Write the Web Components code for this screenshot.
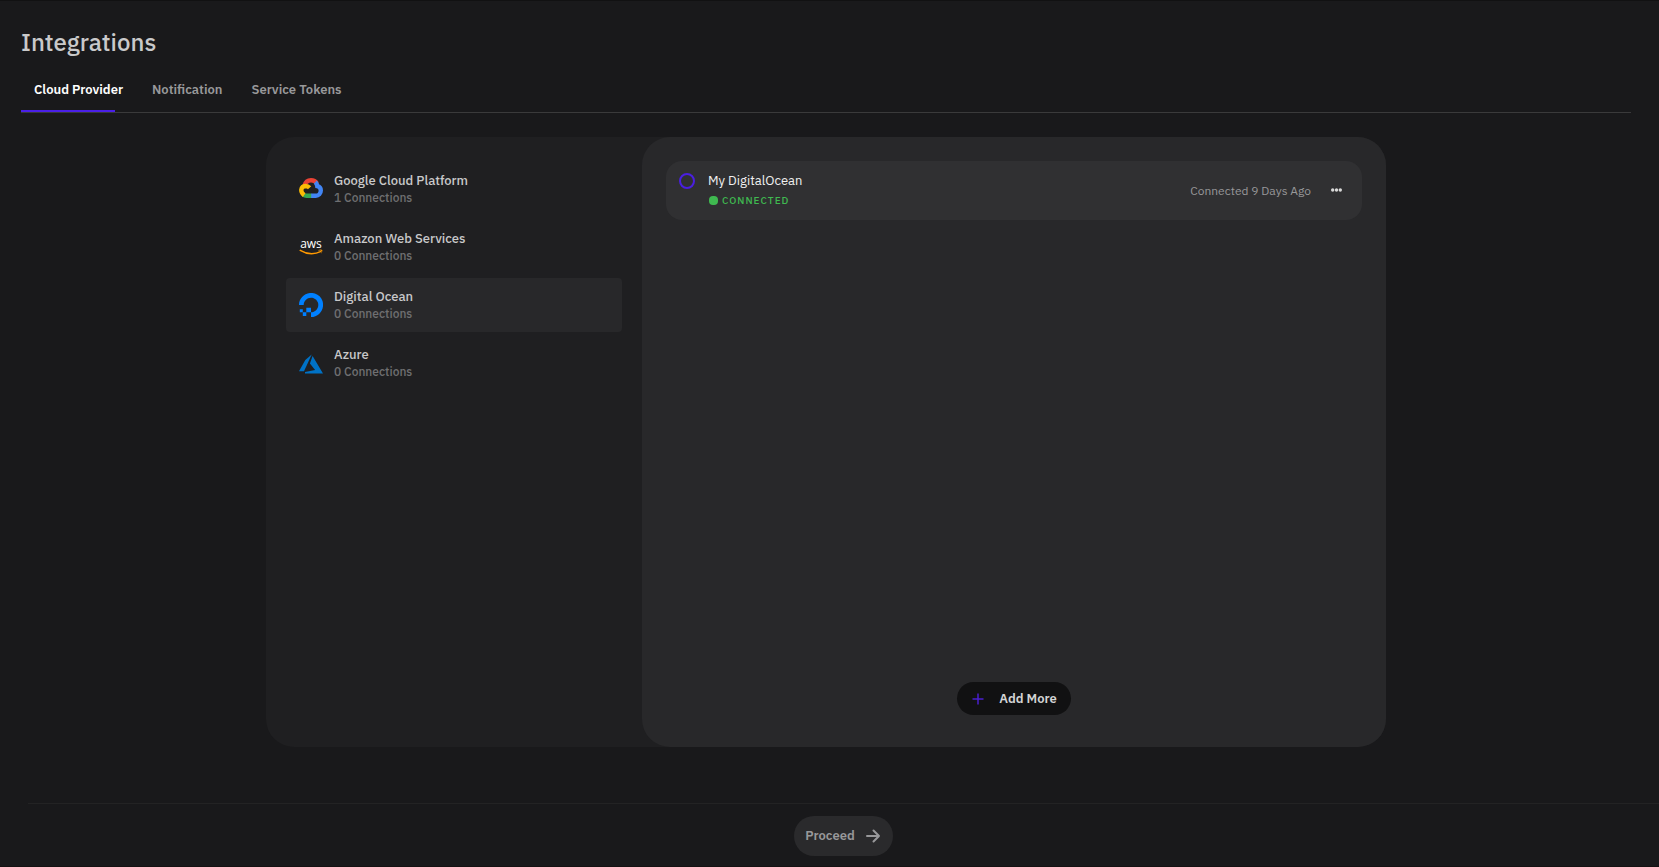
<!DOCTYPE html>
<html lang="en">
<head>
<meta charset="utf-8">
<meta name="viewport" content="width=device-width, initial-scale=1">
<title>Integrations</title>
<style>
    body {
        margin: 0;
        background: #19191b;
        color: #c9c9ca;
        font-family: "IBM Plex Sans", Roboto, "Liberation Sans", sans-serif;
        font-size: 13px;
    }
</style>
</head>
<body>

<integrations-page>
    <tab-bar slot="tabs">
        <tab-item selected>Cloud Provider</tab-item>
        <tab-item>Notification</tab-item>
        <tab-item>Service Tokens</tab-item>
    </tab-bar>

    <split-panel>
        <provider-item slot="side" name="Google Cloud Platform" count="1">
            <svg width="24" height="24" viewBox="0 1 24 24" fill="none" stroke-width="4.400" aria-hidden="true">
                <path d="M5.300 10C6.400 6.200 9 4.300 12 4.300c2.500 0 4.500 1 6 3.200" stroke="#ea4335"/>
                <path d="M16.300 6.200c1.200 1.100 1.800 2.300 2 4 2.200.5 3.500 2.100 3.500 4.300 0 3.100-2.200 5.300-5 5.300H12" stroke="#4285f4"/>
                <path d="M12.200 19.800H7.500c-1.200 0-2.200-.3-3.200-1" stroke="#34a853"/>
                <path d="M5.200 19.100C.8 16 1.500 10.300 6.600 10c1.700 0 2.900.6 4 1.800" stroke="#fbbc05"/>
            </svg>
        </provider-item>
        <provider-item slot="side" name="Amazon Web Services" count="0">
            <svg width="24" height="24" viewBox="0 0 24 24" overflow="visible" aria-hidden="true">
                <text x="12" y="13" text-anchor="middle" font-family="Open Sans, sans-serif" font-size="12" font-weight="500" fill="#fff">aws</text>
                <path d="M.7 15.200c7 4.200 15 4.400 21.400 1.200" fill="none" stroke="#f90" stroke-width="1.500"/>
                <path d="M19.300 15.100c1.500-.7 3.500-.7 4 0 .3.800-.3 2.700-1.400 3.800.6-1.500.8-2.600.5-3-.4-.4-1.600-.5-3.100-.3z" fill="#f90"/>
            </svg>
        </provider-item>
        <provider-item slot="side" name="Digital Ocean" count="0" selected>
            <svg width="24" height="24" viewBox="0 0 24 24" fill="#0080ff" aria-hidden="true">
                <path d="M12 24v-4.700c4.900 0 8.700-4.900 6.800-10a7 7 0 0 0-4.100-4.100C9.600 3.300 4.700 7.100 4.700 12H0C0 4.100 7.700-2 15.900.5c3.600 1.100 6.500 4 7.600 7.600C26 16.300 19.900 24 12 24z"/>
                <path d="M7.300 14.700H12v4.600H7.300zM3.800 19.300h3.500v3.600H3.800zM.8 16.300h3v3h-3z"/>
            </svg>
        </provider-item>
        <provider-item slot="side" name="Azure" count="0">
            <svg width="24" height="24" viewBox="0 0 24 24" fill="#0072c6" aria-hidden="true">
                <path d="M12.700 3.500 6.300 9 0 20.300h5z"/>
                <path d="m13.600 5-2.700 7.600 5.200 6.500L6 20.900v1.600h18z"/>
            </svg>
        </provider-item>

        <connection-card name="My DigitalOcean" status="CONNECTED" when="Connected 9 Days Ago"></connection-card>
        <pill-button slot="action" kind="dark">
            <svg slot="before" width="14" height="14" viewBox="0 0 14 14" stroke="#4a1fd0" stroke-width="1.500" aria-hidden="true">
                <path d="M7 1.500v11M1.500 7h11"/>
            </svg>
            Add More
        </pill-button>
    </split-panel>

    <pill-button slot="footer" kind="muted">
        Proceed
        <svg slot="after" width="16" height="16" viewBox="0 0 16 16" fill="none" stroke="#98989a" stroke-width="2" stroke-linecap="round" stroke-linejoin="round" aria-hidden="true">
            <path d="M2 8h12M8.500 2.500 14 8l-5.500 5.500"/>
        </svg>
    </pill-button>
</integrations-page>

<script>
class IntegrationsPage extends HTMLElement {
    constructor() {
        super();
        this.attachShadow({ mode: 'open' }).innerHTML = `
            <style>
                :host {
                    display: flex;
                    flex-direction: column;
                    box-sizing: border-box;
                    min-height: 100vh;
                    border-top: 1px solid #111112;
                    border-bottom: 1px solid #151112;
                }
                header { padding: 25px 28px 0 21px; }
                h1 {
                    margin: 0;
                    font-size: 24px;
                    line-height: 32px;
                    font-weight: 500;
                }
                main {
                    flex: 1;
                    display: flex;
                    justify-content: center;
                    padding: 24px 28px 56px 21px;
                }
                footer {
                    display: flex;
                    justify-content: center;
                    margin-left: 28px;
                    padding: 12px 0 10px;
                    border-top: 1px solid #232324;
                }
            </style>
            <header>
                <h1>Integrations</h1>
                <slot name="tabs"></slot>
            </header>
            <main><slot></slot></main>
            <footer><slot name="footer"></slot></footer>
        `;
    }
}

class TabBar extends HTMLElement {
    constructor() {
        super();
        this.attachShadow({ mode: 'open' }).innerHTML = `
            <style>
                :host {
                    display: flex;
                    gap: 3px;
                    margin-top: 10px;
                    border-bottom: 1px solid #3a3a3b;
                }
            </style>
            <slot></slot>
        `;
    }

    connectedCallback() {
        this.setAttribute('role', 'tablist');
    }
}

class TabItem extends HTMLElement {
    constructor() {
        super();
        this.attachShadow({ mode: 'open' }).innerHTML = `
            <style>
                :host { display: block; }
                button {
                    height: 44px;
                    padding: 0 13px 2px;
                    border: 0;
                    background: none;
                    color: #98989a;
                    font: inherit;
                    font-weight: 600;
                    cursor: pointer;
                }
                /* the marker is narrower than the tab */
                :host([selected]) button {
                    color: #fff;
                    background: linear-gradient(#4a1fe8, #4a1fe8) left bottom / 82% 2px no-repeat;
                }
            </style>
            <button type="button" role="tab"><slot></slot></button>
        `;
    }

    connectedCallback() {
        this.shadowRoot.querySelector('button').setAttribute('aria-selected', this.hasAttribute('selected'));
    }
}

class SplitPanel extends HTMLElement {
    constructor() {
        super();
        this.attachShadow({ mode: 'open' }).innerHTML = `
            <style>
                :host {
                    display: flex;
                    flex: 1;
                    max-width: 1120px;
                    background: #1f1f21;
                    border-radius: 28px;
                }
                nav {
                    display: flex;
                    flex-direction: column;
                    gap: 4px;
                    box-sizing: border-box;
                    width: 376px;
                    padding: 25px 20px;
                }
                section {
                    flex: 1;
                    display: flex;
                    flex-direction: column;
                    padding: 24px 24px 32px;
                    background: #28282a;
                    border-radius: 28px;
                }
                .list { flex: 1; }
                .action {
                    display: flex;
                    justify-content: center;
                }
            </style>
            <nav aria-label="Providers"><slot name="side"></slot></nav>
            <section>
                <div class="list"><slot></slot></div>
                <div class="action"><slot name="action"></slot></div>
            </section>
        `;
    }
}

class ProviderItem extends HTMLElement {
    constructor() {
        super();
        this.attachShadow({ mode: 'open' }).innerHTML = `
            <style>
                :host { display: block; }
                button {
                    display: flex;
                    align-items: center;
                    gap: 11px;
                    width: 100%;
                    height: 54px;
                    padding: 0 13px;
                    border: 0;
                    border-radius: 4px;
                    background: none;
                    color: inherit;
                    font: inherit;
                    text-align: left;
                    cursor: pointer;
                }
                :host([selected]) button { background: #28282a; }
                .text {
                    display: flex;
                    flex-direction: column;
                    line-height: 17px;
                }
                .name { font-weight: 500; }
                .count {
                    color: #6f6f71;
                    font-size: 12px;
                    font-weight: 500;
                }
            </style>
            <button type="button">
                <slot></slot>
                <span class="text">
                    <span class="name"></span>
                    <span class="count"></span>
                </span>
            </button>
        `;
    }

    connectedCallback() {
        const root = this.shadowRoot;
        root.querySelector('.name').textContent = this.getAttribute('name');
        root.querySelector('.count').textContent = this.getAttribute('count') + ' Connections';
    }
}

class ConnectionCard extends HTMLElement {
    constructor() {
        super();
        this.attachShadow({ mode: 'open' }).innerHTML = `
            <style>
                :host {
                    display: flex;
                    align-items: center;
                    padding: 9px 12px 10px 13px;
                    background: #303032;
                    border-radius: 16px;
                }
                input {
                    appearance: none;
                    align-self: flex-start;
                    width: 16px;
                    height: 16px;
                    margin: 3px 13px 0 0;
                    border: 2px solid #4a1fe0;
                    border-radius: 50%;
                }
                .info { flex: 1; }
                label {
                    display: block;
                    color: #f0f0f0;
                    line-height: 21px;
                }
                .status {
                    display: flex;
                    align-items: center;
                    gap: 4px;
                    padding-left: 1px;
                    color: #3fb950;
                    font-size: 10px;
                    font-weight: 500;
                    letter-spacing: 1px;
                    line-height: 19px;
                }
                .status::before {
                    content: "";
                    width: 9px;
                    height: 9px;
                    border-radius: 4px;
                    background: #3fb950;
                }
                .when {
                    color: #98989a;
                    font-size: 12px;
                }
                button {
                    display: flex;
                    margin-left: 12px;
                    padding: 8px;
                    border: 0;
                    background: none;
                    cursor: pointer;
                }
            </style>
            <input type="radio" id="pick" name="connection">
            <div class="info">
                <label for="pick"></label>
                <div class="status"></div>
            </div>
            <span class="when"></span>
            <button type="button" aria-label="More options">
                <svg width="11" height="4" viewBox="0 0 11 4" fill="#d8d8d8">
                    <circle cx="1.700" cy="2" r="1.700"/><circle cx="5.500" cy="2" r="1.700"/><circle cx="9.300" cy="2" r="1.700"/>
                </svg>
            </button>
        `;
    }

    connectedCallback() {
        const root = this.shadowRoot;
        root.querySelector('label').textContent = this.getAttribute('name');
        root.querySelector('.status').textContent = this.getAttribute('status');
        root.querySelector('.when').textContent = this.getAttribute('when');
    }
}

class PillButton extends HTMLElement {
    constructor() {
        super();
        this.attachShadow({ mode: 'open' }).innerHTML = `
            <style>
                :host { display: block; }
                button {
                    display: flex;
                    align-items: center;
                    border: 0;
                    border-radius: 20px;
                    font: inherit;
                    font-weight: 600;
                    cursor: pointer;
                }
                :host([kind="dark"]) button {
                    gap: 14px;
                    height: 33px;
                    padding: 0 14px;
                    background: #111112;
                    color: #d4d4d5;
                }
                :host([kind="muted"]) button {
                    gap: 10px;
                    height: 40px;
                    padding: 0 12px 1px 11px;
                    background: #2a2a2c;
                    color: #98989a;
                }
            </style>
            <button type="button"><slot name="before"></slot><span><slot></slot></span><slot name="after"></slot></button>
        `;
    }
}

customElements.define('integrations-page', IntegrationsPage);
customElements.define('tab-bar', TabBar);
customElements.define('tab-item', TabItem);
customElements.define('split-panel', SplitPanel);
customElements.define('provider-item', ProviderItem);
customElements.define('connection-card', ConnectionCard);
customElements.define('pill-button', PillButton);
</script>
</body>
</html>
